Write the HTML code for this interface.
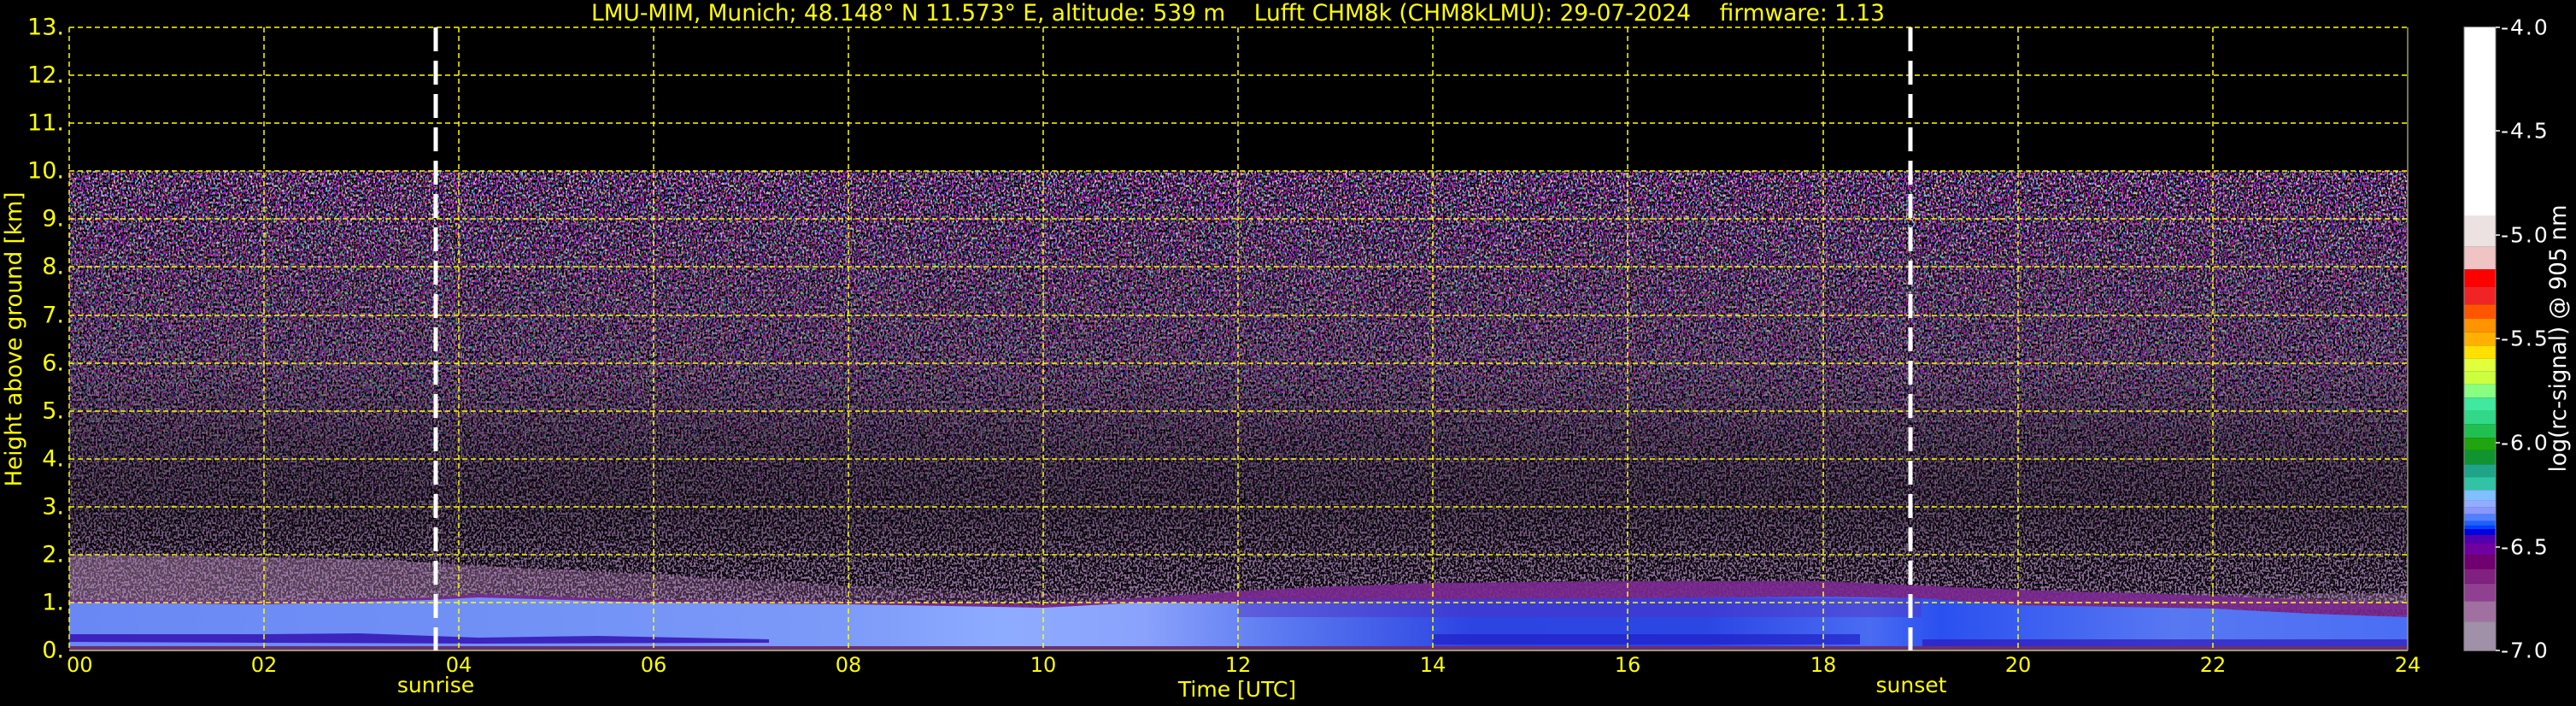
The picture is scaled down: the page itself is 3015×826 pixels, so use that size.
<!DOCTYPE html>
<html><head><meta charset="utf-8"><style>
html,body{margin:0;padding:0;background:#000;}
svg{display:block;}
text{font-family:"DejaVu Sans","Liberation Sans",sans-serif;}
</style></head><body>
<svg width="3015" height="826" viewBox="0 0 3015 826" xmlns="http://www.w3.org/2000/svg">
<defs>
<filter id="nz" x="0" y="0" width="100%" height="100%" filterUnits="objectBoundingBox" color-interpolation-filters="sRGB">
<feTurbulence type="fractalNoise" baseFrequency="0.48 0.36" numOctaves="1" seed="7" result="t"/>
<feColorMatrix in="t" type="matrix" values="4.5 0 0 0 -1.4  0 4.5 0 0 -1.8  0 0 4 0 -0.9  0 0 0 9 -4.0"/>
</filter>
<filter id="nz2" x="0" y="0" width="100%" height="100%" filterUnits="objectBoundingBox" color-interpolation-filters="sRGB">
<feTurbulence type="fractalNoise" baseFrequency="0.48 0.36" numOctaves="1" seed="19" result="t"/>
<feColorMatrix in="t" type="matrix" values="0 0 0 0 0.66  0 0 0 0 0.52  0 0 0 0 0.72  9 0 0 0 -4.2"/>
</filter>
<linearGradient id="dens" x1="0" y1="0" x2="0" y2="1">
<stop offset="0" stop-color="#fff" stop-opacity="0.85"/>
<stop offset="0.4" stop-color="#fff" stop-opacity="0.6"/>
<stop offset="0.6" stop-color="#fff" stop-opacity="0.25"/>
<stop offset="0.8" stop-color="#fff" stop-opacity="0.1"/>
<stop offset="1" stop-color="#fff" stop-opacity="0.1"/>
</linearGradient>
<linearGradient id="dens2" x1="0" y1="0" x2="0" y2="1">
<stop offset="0" stop-color="#fff" stop-opacity="0.2"/>
<stop offset="0.45" stop-color="#fff" stop-opacity="0.55"/>
<stop offset="0.7" stop-color="#fff" stop-opacity="0.55"/>
<stop offset="0.82" stop-color="#fff" stop-opacity="0.8"/>
<stop offset="1" stop-color="#fff" stop-opacity="1"/>
</linearGradient>
<mask id="m1" maskUnits="userSpaceOnUse" x="81" y="200" width="2737" height="561">
<rect x="81" y="200" width="2737" height="561" fill="url(#dens)"/>
</mask>
<mask id="m2" maskUnits="userSpaceOnUse" x="81" y="200" width="2737" height="561">
<rect x="81" y="200" width="2737" height="561" fill="url(#dens2)"/>
</mask>
<linearGradient id="pinkg" x1="0" y1="0" x2="1" y2="0">
<stop offset="0" stop-color="#a07898" stop-opacity="0.55"/>
<stop offset="0.2" stop-color="#9a6e96" stop-opacity="0.45"/>
<stop offset="0.4" stop-color="#905090" stop-opacity="0.2"/>
<stop offset="0.8" stop-color="#905090" stop-opacity="0.2"/>
<stop offset="1" stop-color="#a080a0" stop-opacity="0.4"/>
</linearGradient>
<linearGradient id="blg" x1="0" y1="0" x2="1" y2="0">
<stop offset="0" stop-color="#6a88f4"/>
<stop offset="0.17" stop-color="#7090f6"/>
<stop offset="0.33" stop-color="#7c9af8"/>
<stop offset="0.4" stop-color="#8eacff"/>
<stop offset="0.46" stop-color="#8aa2fc"/>
<stop offset="0.52" stop-color="#5a78f0"/>
<stop offset="0.6" stop-color="#2c44e2"/>
<stop offset="0.7" stop-color="#2c46e4"/>
<stop offset="0.77" stop-color="#4a6cf2"/>
<stop offset="0.8" stop-color="#2a50f0"/>
<stop offset="0.9" stop-color="#5878f2"/>
<stop offset="1" stop-color="#4a6ef4"/>
</linearGradient>
</defs>
<rect width="3015" height="826" fill="#000"/>

<polygon fill="url(#pinkg)" points="81,649 309,652 450,655 560,662 765,672 993,685 1221,695 1449,690 1677,684 1905,682 2134,684 2362,690 2590,695 2818,694 2818,713 81,705"/>
<rect x="81" y="200" width="2737" height="561" filter="url(#nz)" mask="url(#m1)"/>
<rect x="81" y="200" width="2737" height="561" filter="url(#nz2)" mask="url(#m2)"/>

<polygon fill="#7a2890" opacity="0.9" points="81,702 309,704 503,699 560,695 765,702 993,704 1221,707 1335,700 1449,692 1563,686 1677,682 1905,680 2134,680 2248,685 2362,690 2590,697 2704,702 2818,705 2818,725 81,725"/>
<polygon fill="url(#blg)" points="81,705 309,707 503,702 560,699 765,705 993,707 1221,711 1335,705 1449,706 1563,704 1677,702 1905,700 2134,698 2248,700 2362,708 2590,712 2704,718 2818,722 2818,759 81,759"/>
<rect x="1449" y="700" width="800" height="22" fill="#5030c0" opacity="0.45"/>
<polygon fill="#3412b4" opacity="0.85" points="81,742 309,742 420,741 560,746 700,744 900,748 900,752 560,753 309,752 81,751"/>
<rect x="1677" y="742" width="500" height="12" fill="#2020c8" opacity="0.7"/>
<rect x="2250" y="748" width="568" height="8" fill="#3018b8" opacity="0.7"/>
<rect x="81" y="756" width="2737" height="4" fill="#6a3070"/>

<g stroke="#ffff00" stroke-width="1.5" stroke-dasharray="6,4" fill="none">
<line x1="81" y1="32" x2="2818" y2="32"/>
<line x1="81" y1="88" x2="2818" y2="88"/>
<line x1="81" y1="144" x2="2818" y2="144"/>
<line x1="81" y1="200" x2="2818" y2="200"/>
<line x1="81" y1="256" x2="2818" y2="256"/>
<line x1="81" y1="312" x2="2818" y2="312"/>
<line x1="81" y1="369" x2="2818" y2="369"/>
<line x1="81" y1="425" x2="2818" y2="425"/>
<line x1="81" y1="481" x2="2818" y2="481"/>
<line x1="81" y1="537" x2="2818" y2="537"/>
<line x1="81" y1="593" x2="2818" y2="593"/>
<line x1="81" y1="649" x2="2818" y2="649"/>
<line x1="81" y1="705" x2="2818" y2="705"/>
<line x1="81" y1="32" x2="81" y2="761"/>
<line x1="309" y1="32" x2="309" y2="761"/>
<line x1="537" y1="32" x2="537" y2="761"/>
<line x1="765" y1="32" x2="765" y2="761"/>
<line x1="993" y1="32" x2="993" y2="761"/>
<line x1="1221" y1="32" x2="1221" y2="761"/>
<line x1="1449" y1="32" x2="1449" y2="761"/>
<line x1="1677" y1="32" x2="1677" y2="761"/>
<line x1="1905" y1="32" x2="1905" y2="761"/>
<line x1="2134" y1="32" x2="2134" y2="761"/>
<line x1="2362" y1="32" x2="2362" y2="761"/>
<line x1="2590" y1="32" x2="2590" y2="761"/>
</g>
<line x1="2818" y1="32" x2="2818" y2="761" stroke="#9a9a70" stroke-width="1.5"/>
<line x1="81" y1="761" x2="2818" y2="761" stroke="#9a9a70" stroke-width="2"/>

<g stroke="#fff" stroke-width="5" stroke-dasharray="28,11">
<line x1="510" y1="32" x2="510" y2="761"/>
<line x1="2236" y1="32" x2="2236" y2="761"/>
</g>

<text x="692" y="24" font-size="27" fill="#ffff00" textLength="1514" lengthAdjust="spacingAndGlyphs" xml:space="preserve">LMU-MIM, Munich; 48.148° N 11.573° E, altitude: 539 m    Lufft CHM8k (CHM8kLMU): 29-07-2024    firmware: 1.13</text>

<g font-size="27" fill="#ffff00" text-anchor="end" dominant-baseline="central">
<text x="75" y="32">13.</text><text x="75" y="88">12.</text><text x="75" y="144">11.</text>
<text x="75" y="200">10.</text><text x="75" y="256">9.</text><text x="75" y="312">8.</text>
<text x="75" y="369">7.</text><text x="75" y="425">6.</text><text x="75" y="481">5.</text>
<text x="75" y="537">4.</text><text x="75" y="593">3.</text><text x="75" y="649">2.</text>
<text x="75" y="705">1.</text><text x="75" y="761">0.</text>
</g>
<text transform="translate(25,397) rotate(-90)" font-size="27" fill="#ffff00" text-anchor="middle" textLength="345" lengthAdjust="spacingAndGlyphs">Height above ground [km]</text>

<g font-size="24" fill="#ffff00">
<text x="78" y="786">00</text>
<text x="309" y="786" text-anchor="middle">02</text>
<text x="537" y="786" text-anchor="middle">04</text>
<text x="765" y="786" text-anchor="middle">06</text>
<text x="993" y="786" text-anchor="middle">08</text>
<text x="1221" y="786" text-anchor="middle">10</text>
<text x="1449" y="786" text-anchor="middle">12</text>
<text x="1677" y="786" text-anchor="middle">14</text>
<text x="1905" y="786" text-anchor="middle">16</text>
<text x="2134" y="786" text-anchor="middle">18</text>
<text x="2362" y="786" text-anchor="middle">20</text>
<text x="2590" y="786" text-anchor="middle">22</text>
<text x="2818" y="786" text-anchor="middle">24</text>
<text x="510" y="810" text-anchor="middle" font-size="25">sunrise</text>
<text x="2237" y="810" text-anchor="middle" font-size="25">sunset</text>
<text x="1448" y="815" text-anchor="middle" font-size="25">Time [UTC]</text>
</g>

<g>
<rect x="2884" y="31.6" width="37" height="221.3" fill="#ffffff"/>
<rect x="2884" y="252.9" width="37" height="35.8" fill="#ece2e2"/>
<rect x="2884" y="288.7" width="37" height="26.4" fill="#f0c4c4"/>
<rect x="2884" y="315.1" width="37" height="20.5" fill="#ff0000"/>
<rect x="2884" y="335.6" width="37" height="20.6" fill="#f02424"/>
<rect x="2884" y="356.2" width="37" height="16.8" fill="#ff5500"/>
<rect x="2884" y="373" width="37" height="15.8" fill="#ff9400"/>
<rect x="2884" y="388.8" width="37" height="15.8" fill="#ffb000"/>
<rect x="2884" y="404.6" width="37" height="15.3" fill="#ffe000"/>
<rect x="2884" y="419.9" width="37" height="14.8" fill="#e0ff3c"/>
<rect x="2884" y="434.7" width="37" height="14.7" fill="#ccff40"/>
<rect x="2884" y="449.4" width="37" height="15.8" fill="#88ff80"/>
<rect x="2884" y="465.2" width="37" height="14.8" fill="#40e8a0"/>
<rect x="2884" y="480" width="37" height="16.3" fill="#30d888"/>
<rect x="2884" y="496.3" width="37" height="15.8" fill="#20c050"/>
<rect x="2884" y="512.1" width="37" height="14.8" fill="#20a410"/>
<rect x="2884" y="526.9" width="37" height="16.3" fill="#109430"/>
<rect x="2884" y="543.2" width="37" height="15.3" fill="#1ea488"/>
<rect x="2884" y="558.5" width="37" height="14.7" fill="#30c4a4"/>
<rect x="2884" y="573.2" width="37" height="12.7" fill="#80c0ff"/>
<rect x="2884" y="585.9" width="37" height="7.9" fill="#94acff"/>
<rect x="2884" y="593.8" width="37" height="7.9" fill="#8898ff"/>
<rect x="2884" y="601.7" width="37" height="7.9" fill="#5080ff"/>
<rect x="2884" y="609.6" width="37" height="5.3" fill="#2060ff"/>
<rect x="2884" y="614.9" width="37" height="4.2" fill="#0040ff"/>
<rect x="2884" y="619.1" width="37" height="6.8" fill="#0000e0"/>
<rect x="2884" y="625.9" width="37" height="9.5" fill="#5000b0"/>
<rect x="2884" y="635.4" width="37" height="13.7" fill="#7000a0"/>
<rect x="2884" y="649.1" width="37" height="16.9" fill="#700070"/>
<rect x="2884" y="666" width="37" height="16.8" fill="#802080"/>
<rect x="2884" y="682.8" width="37" height="20.6" fill="#904090"/>
<rect x="2884" y="703.4" width="37" height="23.7" fill="#a070a0"/>
<rect x="2884" y="727.1" width="37" height="34.2" fill="#a090a8"/>
<rect x="2884" y="31.6" width="37" height="729.7" fill="none" stroke="#888" stroke-width="1"/>
</g>
<g stroke="#fff" stroke-width="1.5">
<line x1="2921" y1="32" x2="2926" y2="32"/><line x1="2921" y1="153" x2="2926" y2="153"/>
<line x1="2921" y1="275" x2="2926" y2="275"/><line x1="2921" y1="396" x2="2926" y2="396"/>
<line x1="2921" y1="518" x2="2926" y2="518"/><line x1="2921" y1="640" x2="2926" y2="640"/>
<line x1="2921" y1="761" x2="2926" y2="761"/>
</g>
<g font-size="25" fill="#fff" dominant-baseline="central" letter-spacing="2">
<text x="2927" y="32">-4.0</text><text x="2927" y="153">-4.5</text>
<text x="2927" y="275">-5.0</text><text x="2927" y="396">-5.5</text>
<text x="2927" y="518">-6.0</text><text x="2927" y="640">-6.5</text>
<text x="2927" y="761">-7.0</text>
</g>
<text transform="translate(3003,396) rotate(-90)" font-size="27" fill="#fff" text-anchor="middle" textLength="313" lengthAdjust="spacingAndGlyphs">log(rc-signal) @ 905 nm</text>
</svg>
</body></html>
